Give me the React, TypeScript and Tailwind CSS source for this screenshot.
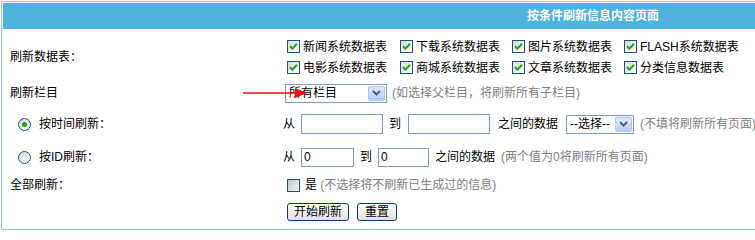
import React from "react";

const tables = [
  ["新闻系统数据表", "下载系统数据表", "图片系统数据表", "FLASH系统数据表"],
  ["电影系统数据表", "商城系统数据表", "文章系统数据表", "分类信息数据表"],
];

function Check({ checked = true }: { checked?: boolean }) {
  return (
    <span
      className={`inline-flex h-[13px] w-[13px] shrink-0 items-center justify-center border border-[#1c5180] ${
        checked ? "bg-gradient-to-br from-[#dcdcd7] to-white" : "bg-gradient-to-br from-[#c8c8c3] to-[#f4f4f0]"
      }`}
    >
      {checked && (
        <svg width="9" height="9" viewBox="0 0 9 9">
          <path d="M1 4.2 L3.4 6.6 L8 1.8" fill="none" stroke="#21a121" strokeWidth="2" />
        </svg>
      )}
    </span>
  );
}

function Radio({ checked = false }: { checked?: boolean }) {
  return (
    <span className="inline-flex h-[13px] w-[13px] shrink-0 items-center justify-center rounded-full border border-[#1c5180] bg-gradient-to-br from-[#dcdcd7] to-white">
      {checked && <span className="h-[5px] w-[5px] rounded-full bg-[#21a121]" />}
    </span>
  );
}

function DropBtn() {
  return (
    <span className="flex h-full w-[17px] items-center justify-center rounded-[2px] border border-[#b2c6f4] bg-gradient-to-b from-[#dfe8fd] to-[#b6cbf7]">
      <svg width="9" height="6" viewBox="0 0 9 6">
        <path d="M1 1 L4.5 4.5 L8 1" fill="none" stroke="#4d6185" strokeWidth="2" />
      </svg>
    </span>
  );
}

function FakeSelect({ label, w }: { label: string; w: string }) {
  return (
    <span className={`flex h-[19px] items-center justify-between border border-[#7f9db9] bg-white p-[1px] pl-[3px] ${w}`}>
      <span className="leading-none">{label}</span>
      <DropBtn />
    </span>
  );
}

function Input({ w, value = "" }: { w: string; value?: string }) {
  return (
    <span className={`flex items-center border border-[#7f9db9] bg-white pl-[2px] leading-none ${w}`}>{value}</span>
  );
}

function Button({ children, w }: { children: React.ReactNode; w: string }) {
  return (
    <span className={`flex h-[18px] items-center justify-center rounded-[3px] border border-[#003c74] bg-gradient-to-b from-white to-[#e3e3db] leading-none ${w}`}>
      {children}
    </span>
  );
}

export default function App() {
  return (
    <div className="h-[236px] w-[755px] overflow-hidden bg-white pl-[1px] pt-[1px] font-['Liberation_Sans','Noto_Sans_CJK_SC',sans-serif] text-[12px] text-black">
      <div className="w-[770px] border border-[#8dcde8] p-[1px] pb-0">
        <div className="flex h-[26px] items-center bg-[#4fb3dd] pl-[524px] font-bold text-white">
          按条件刷新信息内容页面
        </div>

        <div className="grid grid-cols-[280px_1fr] pb-[5px]">
          {/* tables */}
          <div className="flex h-[53px] items-center pl-[7px] pt-[3px]">刷新数据表：</div>
          <div className="pl-[4px] pt-[7px]">
            {tables.map((row, i) => (
              <div key={i} className="grid h-[21px] grid-cols-[113px_112px_112px_auto] items-center">
                {row.map((t) => (
                  <span key={t} className="flex items-center gap-[3px]">
                    <Check />
                    <span>{t}</span>
                  </span>
                ))}
              </div>
            ))}
          </div>

          {/* columns */}
          <div className="relative flex h-[22px] items-center pl-[7px]">刷新栏目</div>
          <div className="relative flex h-[22px] items-center gap-[5px] pl-[2px]">
            <FakeSelect label="所有栏目" w="w-[102px]" />
            <span className="text-[#808080]">(如选择父栏目，将刷新所有子栏目)</span>
            <svg className="absolute left-[-40px] top-[5px]" width="66" height="12" viewBox="0 0 66 12">
              <line x1="0" y1="6" x2="56" y2="6" stroke="#e01010" strokeWidth="1.3" />
              <polygon points="52,1 64,6 52,11" fill="#e81010" />
            </svg>
          </div>

          {/* time */}
          <div className="flex h-[40px] items-center gap-[8px] pl-[15px]">
            <Radio checked />
            <span>按时间刷新：</span>
          </div>
          <div className="flex h-[40px] items-center">
            <span className="w-[18px]">从</span>
            <Input w="w-[82px] h-[20px]" />
            <span className="w-[25px] pl-[6px]">到</span>
            <Input w="w-[82px] h-[20px]" />
            <span className="pl-[8px] pr-[8px]">之间的数据</span>
            <FakeSelect label="--选择--" w="w-[68px]" />
            <span className="pl-[6px] text-[#808080]">(不填将刷新所有页面)</span>
          </div>

          {/* id */}
          <div className="flex h-[26px] items-center gap-[8px] pl-[15px]">
            <Radio />
            <span>按ID刷新：</span>
          </div>
          <div className="flex h-[26px] items-center">
            <span className="w-[18px]">从</span>
            <Input w="w-[53px] h-[19px]" value="0" />
            <span className="w-[24px] pl-[6px]">到</span>
            <Input w="w-[51px] h-[19px]" value="0" />
            <span className="pl-[6px]">之间的数据</span>
            <span className="pl-[6px] text-[#808080]">(两个值为0将刷新所有页面)</span>
          </div>

          {/* all */}
          <div className="flex h-[30px] items-center pl-[7px]">全部刷新：</div>
          <div className="flex h-[30px] items-center gap-[5px] pl-[4px]">
            <Check checked={false} />
            <span>是 <span className="text-[#808080]">(不选择将不刷新已生成过的信息)</span></span>
          </div>

          {/* buttons */}
          <div className="h-[24px]" />
          <div className="flex h-[24px] items-center gap-[8px] pl-[4px]">
            <Button w="w-[62px]">开始刷新</Button>
            <Button w="w-[40px]">重置</Button>
          </div>
        </div>
      </div>
    </div>
  );
}
